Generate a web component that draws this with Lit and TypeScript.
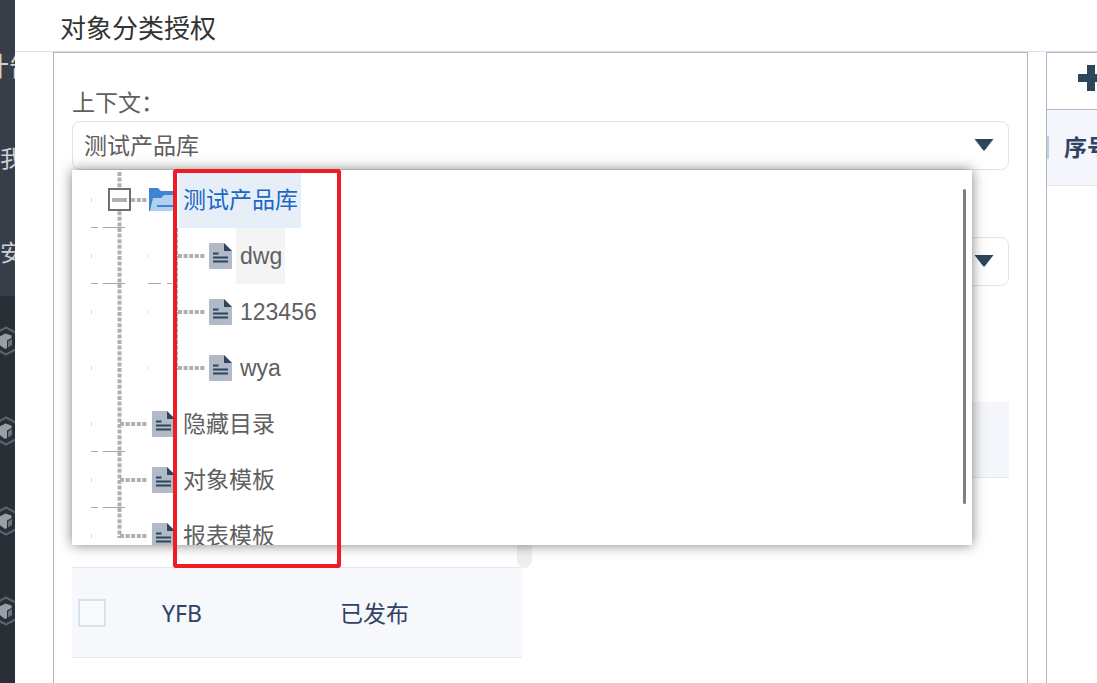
import { LitElement, html, css, svg, nothing } from "lit";
import { customElement } from "lit/decorators.js";

interface TreeNode {
  label: string;
  level: number;
  folder?: boolean;
  state?: string;
  last?: boolean;
  rules?: boolean;
}

const nodes: TreeNode[] = [
  { label: "测试产品库", level: 1, folder: true, state: "selected", rules: true },
  { label: "dwg", level: 2, state: "hover", rules: true },
  { label: "123456", level: 2 },
  { label: "wya", level: 2, last: true },
  { label: "隐藏目录", level: 1, rules: true },
  { label: "对象模板", level: 1, rules: true },
  { label: "报表模板", level: 1, last: true },
];

const arrow = html`<svg class="arrow" width="20" height="12" viewBox="0 0 20 12" aria-hidden="true">
  <path d="M.5 0H19.500L11 11Q10 12 9 11Z" fill="#2c475c" />
</svg>`;

const cube = html`<svg width="30" height="30" viewBox="0 0 30 30" aria-hidden="true">
  <path d="M15 1.500 28 8.500V21.500L15 28.500 2 21.500V8.500Z" fill="none" stroke="#59626d" stroke-width="2.200" />
  <path d="M8.500 10.500 14.500 7.500 20.500 9.500V12L16 14.500V22L14 23 8.500 19Z" fill="#9a9fa6" />
  <path d="M17 15.500 21 13V19L17 21.500Z" fill="#687480" />
</svg>`;

const folderIcon = html`<svg class="icon folder" width="28" height="24" viewBox="0 0 28 24" aria-hidden="true">
  <path d="M0 0H9L12 3H25V23H0Z" fill="#3d85cf" />
  <path d="M4 10H12L15 7H28L25 23H1Z" fill="#b1d0f0" />
  <path d="M8 18H24" stroke="#3d85cf" stroke-width="2" />
</svg>`;

const fileIcon = html`<svg class="icon" width="23" height="26" viewBox="0 0 23 26" aria-hidden="true">
  <path d="M1 0H15L23 8V25Q23 26 22 26H1Q0 26 0 25V1Q0 0 1 0Z" fill="#b1bac7" />
  <path d="M15 0 23 8H15Z" fill="#2c475c" />
  <path d="M4 10.500H9.500M4 14.500H19M4 18.500H19" stroke="#2c475c" stroke-width="1.800" />
</svg>`;

@customElement("app-root")
export class AppRoot extends LitElement {
  static styles = css`
    :host {
      display: flex;
      height: 100vh;
      overflow: hidden;
      background: #fff;
      color: #606060;
      font: 23px/34px "Liberation Sans", "Noto Sans CJK SC", sans-serif;
    }
    * { box-sizing: border-box; }
    .side {
      flex: none;
      width: 15px;
      overflow: hidden;
      background: #282f37;
      color: #d0d0d0;
      display: flex;
      flex-direction: column;
    }
    .menu {
      flex: none;
      height: 296px;
      padding-top: 22px;
      background: #373e49;
      white-space: nowrap;
    }
    .menu a { display: block; height: 94px; line-height: 94px; color: inherit; text-decoration: none; }
    .menu a:first-child { height: 90px; line-height: 90px; margin-left: -17px; font-size: 26px; }
    .cubes { flex: none; display: flex; flex-direction: column; gap: 60px; padding-top: 30px; margin-left: -9px; }
    .cubes svg { display: block; flex: none; }
    .main { flex: 1; min-width: 0; display: flex; flex-direction: column; }
    header { flex: none; height: 52px; padding: 7px 45px 0; border-bottom: 1px solid #dcdfe6; }
    h1 { margin: 0; font-size: 26px; line-height: 44px; font-weight: 400; color: #333; }
    .content { flex: 1; min-height: 0; display: flex; gap: 18px; padding-left: 38px; }
    .panel { border: 1px solid #abb8c6; border-bottom: 0; }
    .left { flex: 1; min-width: 0; padding: 32px 18px 0; }
    .right { flex: none; width: 51px; overflow: hidden; border-right: 0; }
    .field { position: relative; display: flex; flex-direction: column; margin-bottom: 31px; }
    .field label { height: 36px; line-height: 36px; }
    .field select {
      appearance: none;
      height: 49px;
      width: 100%;
      padding: 0 11px;
      border: 1px solid #e2e3e5;
      border-radius: 8px;
      background: #fff;
      color: inherit;
      font: inherit;
    }
    .arrow { position: absolute; right: 15px; bottom: 19px; pointer-events: none; }
    .popup {
      position: absolute;
      z-index: 2;
      top: 85px;
      left: 0;
      right: 37px;
      height: 375px;
      padding-top: 2px;
      overflow: hidden;
      background: #fff;
    }
    .shade { z-index: 1; box-shadow: 0 0 12px rgba(0, 0, 0, 0.5); }
    .thumb { position: absolute; top: 19px; right: 6px; width: 3px; height: 315px; border-radius: 2px; background: #808080; }
    .tree { margin: 0; padding: 0 0 0 19px; list-style: none; }
    .row { display: flex; align-items: center; height: 56px; }
    .cell { flex: none; display: block; width: 57px; height: 56px; }
    .icon { flex: none; margin-left: 4px; margin-right: 4px; }
    .folder { margin-left: 1px; margin-right: 2px; }
    .name { height: 56px; line-height: 56px; padding: 0 3px 0 4px; white-space: nowrap; }
    .selected { background: #e6eef8; color: #1c66c4; }
    .hover { background: #f4f4f4; }
    .mark {
      position: absolute;
      z-index: 3;
      top: 84px;
      left: 101px;
      width: 168px;
      height: 399px;
      border: 4px solid #ee1c25;
      border-radius: 3px;
      pointer-events: none;
    }
    .grid { position: relative; margin-top: 116px; }
    .grid-head { height: 76px; background: #f4f6fb; border-bottom: 1px solid #e0e8f0; }
    table {
      width: 450px;
      border-collapse: separate;
      border-spacing: 0;
      table-layout: fixed;
      color: #2f4366;
      font-family: "Noto Sans", "Noto Sans CJK SC", sans-serif;
    }
    td { height: 90px; padding: 0; border-bottom: 1px solid #e0e8f0; }
    .row-on { background: #f6f8fc; }
    .c1 { width: 90px; }
    .c2 { width: 178px; }
    td input {
      appearance: none;
      display: block;
      width: 28px;
      height: 28px;
      margin: 0 0 0 6px;
      border: 2px solid #d6e1ea;
      background: #f8fafc;
    }
    .bar { position: absolute; top: 76px; left: 445px; width: 15px; height: 90px; border-radius: 8px; background: #efefef; }
    .tools { height: 57px; padding: 10px 0 0 29px; border-bottom: 1px solid #abb8c6; }
    .tools button { display: block; width: 30px; height: 30px; padding: 0; border: 0; background: none; }
    .tools svg { display: block; }
    .head {
      display: flex;
      align-items: center;
      gap: 15px;
      height: 76px;
      background: #f4f6fb;
      border-bottom: 1px solid #e0e8f0;
      color: #2f4366;
      font-weight: 700;
      white-space: nowrap;
    }
    .split { flex: none; width: 2px; height: 23px; background: #c3cfdd; }
  `;

  private lines(n: TreeNode) {
    const dot = "#b0b0b0";
    const own = n.level === 1;
    const end = own && n.last;
    return html`<svg class="cell" viewBox="0 0 57 56" aria-hidden="true">
        <path d=${end ? "M28.500 0V30" : "M28.500 0V56"} stroke=${dot} stroke-width="4" stroke-dasharray="4 1.600" />
        <path d="M.5 26V30" stroke="#d8d8d8" />
        ${n.rules
          ? svg`<path d="M0 55.500H7M12 55.500H34" stroke="#a9a9a9" />`
          : nothing}
        ${own
          ? svg`<path d="M29 28H57" stroke=${dot} stroke-width="4" stroke-dasharray="4 1.600" />`
          : nothing}
        ${n.folder
          ? svg`<rect x="18" y="17" width="21" height="21" fill="#fff" stroke="#707070" stroke-width="2" />
              <path d="M21 28H36" stroke="#b0b0b0" stroke-width="4" />`
          : nothing}
      </svg>
      ${own
        ? nothing
        : html`<svg class="cell" viewBox="0 0 57 56" aria-hidden="true">
            <path d=${n.last ? "M28 0V30" : "M28 0V56"} stroke=${dot} stroke-width="4" stroke-dasharray="4 1.600" />
            <path d="M30 28H57" stroke=${dot} stroke-width="4" stroke-dasharray="4 1.600" />
            <path d="M.5 26V30" stroke="#e4e4e4" />
            ${n.rules ? svg`<path d="M0 55.500H13M19 55.500H24" stroke="#a9a9a9" />` : nothing}
          </svg>`}`;
  }

  render() {
    return html`
      <nav class="side">
        <div class="menu">
          <a href="#">计告</a>
          <a href="#">我</a>
          <a href="#">安</a>
        </div>
        <div class="cubes">${[0, 1, 2, 3].map(() => cube)}</div>
      </nav>
      <div class="main">
        <header><h1>对象分类授权</h1></header>
        <div class="content">
          <section class="panel left">
            <div class="field">
              <label for="context">上下文：</label>
              <select id="context"><option>测试产品库</option></select>
              ${arrow}
              <div class="popup shade"></div>
              <div class="popup">
                <ul class="tree">
                  ${nodes.map(
                    (n) => html`<li class="row">
                      ${this.lines(n)}${n.folder ? folderIcon : fileIcon}
                      <span class="name ${n.state ?? ""}">${n.label}</span>
                    </li>`
                  )}
                </ul>
                <div class="thumb"></div>
              </div>
              <div class="mark"></div>
            </div>
            <div class="field">
              <label for="kind"></label>
              <select id="kind"></select>
              ${arrow}
            </div>
            <div class="grid">
              <div class="grid-head"></div>
              <table>
                <colgroup><col class="c1" /><col class="c2" /><col /></colgroup>
                <tbody>
                  <tr><td></td><td></td><td></td></tr>
                  <tr class="row-on">
                    <td><input type="checkbox" aria-label="YFB" /></td>
                    <td>YFB</td>
                    <td>已发布</td>
                  </tr>
                </tbody>
              </table>
              <div class="bar"></div>
            </div>
          </section>
          <section class="panel right">
            <div class="tools">
              <button aria-label="+">
                <svg width="30" height="30" viewBox="0 0 30 30"><path d="M11 2H19V11H28V19H19V28H11V19H2V11H11Z" fill="#2c475c" /></svg>
              </button>
            </div>
            <div class="head"><span class="split"></span><span>序号</span></div>
          </section>
        </div>
      </div>
    `;
  }
}
